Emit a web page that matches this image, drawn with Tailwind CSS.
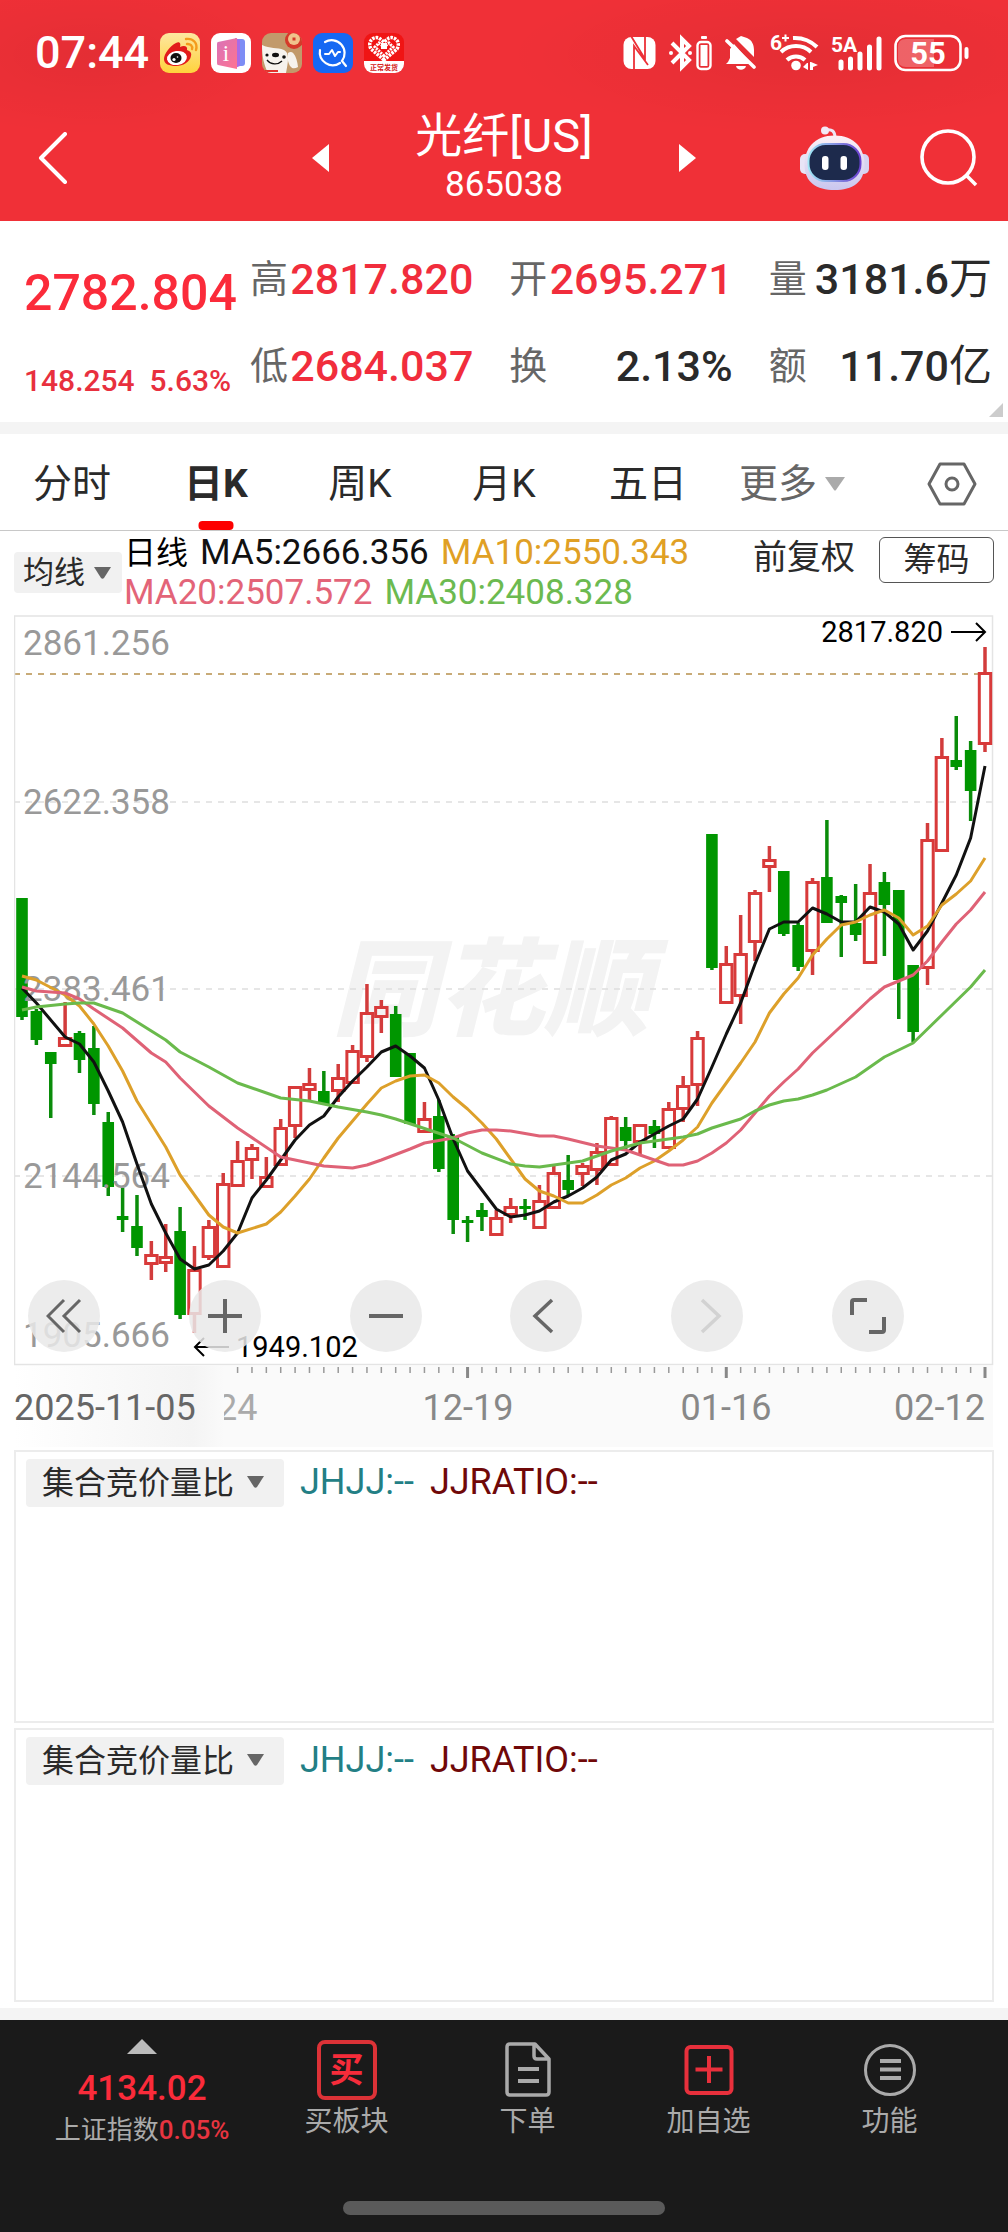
<!DOCTYPE html>
<html lang="zh-CN">
<head>
<meta charset="utf-8">
<meta name="viewport" content="width=device-width, initial-scale=1">
<title>光纤[US] 865038</title>
<script src="https://cdn.jsdelivr.net/npm/@tailwindcss/browser@4"></script>
</head>
<body class="bg-white font-[Roboto,'Noto_Sans_CJK_SC',sans-serif] text-[#2a2a2a]">

<header class="bg-[#f03037] bg-[radial-gradient(ellipse_200px_80px_at_9%_25%,rgba(0,0,0,0.05),transparent),radial-gradient(ellipse_300px_80px_at_80%_25%,rgba(0,0,0,0.05),transparent)] text-white">
  <!-- Status bar -->
  <div class="flex h-[106px] items-center justify-between pr-[38px] pl-[35px]">
    <div class="flex items-center gap-3">
      <span class="w-[113px] text-[45px] leading-[50px] font-medium">07:44</span>
      <div class="flex gap-[11px]">
        <svg class="size-10" viewBox="0 0 40 40" aria-hidden="true">
          <defs><linearGradient id="wb" x1="0" y1="0" x2="0" y2="1"><stop offset="0" stop-color="#fde7a0"/><stop offset="1" stop-color="#ffd23c"/></linearGradient></defs>
          <rect width="40" height="40" rx="9" fill="url(#wb)"/>
          <path d="M4 26c0-5 6-13 12-16 4-2 5 1 4 4 4-2 8-1 7 3 3 1 5 3 4 6-1 6-8 10-15 10S4 31 4 26z" fill="#e21b1b"/>
          <ellipse cx="17" cy="25" rx="10" ry="7" fill="#fff" transform="rotate(-8 17 25)"/>
          <ellipse cx="16" cy="25" rx="5.500" ry="5" fill="#111"/><circle cx="14" cy="26.500" r="1.600" fill="#fff"/><circle cx="17.500" cy="24" r=".8" fill="#fff"/>
          <path d="M26 6c7-1 12 4 10 11M27 11c3-.5 6 2 5 5" fill="none" stroke="#f49b1c" stroke-width="2.400" stroke-linecap="round"/>
        </svg>
        <svg class="size-10" viewBox="0 0 40 40" aria-hidden="true">
          <defs><linearGradient id="bk" x1="0" y1="0" x2="1" y2="1"><stop offset="0" stop-color="#d873b8"/><stop offset="1" stop-color="#ff7391"/></linearGradient></defs>
          <rect width="40" height="40" rx="9" fill="#fff"/>
          <path d="M26 6h5q3 0 3 3v21q0 3-3 3h-5z" fill="#7d8df5"/><path d="M24 5l5 2v26l-5 2z" fill="#a86be8"/>
          <path d="M7 9l19-4v31L7 32q-1 0-1-2V11q0-2 1-2z" fill="url(#bk)"/>
          <text x="15" y="28" text-anchor="middle" font-family="Liberation Serif,serif" font-size="23" fill="#fff">i</text>
        </svg>
        <svg class="size-10" viewBox="0 0 40 40" aria-hidden="true">
          <defs><clipPath id="dogc"><rect width="40" height="40" rx="9"/></clipPath></defs>
          <g clip-path="url(#dogc)"><rect width="40" height="40" fill="#c29a6b"/>
          <path d="M0 12c8 4 15 2 22 5 6 3 4 12 2 23H6C2 32 0 24 0 12z" fill="#f6f3ee"/>
          <path d="M26 20c6-4 9 6 10 14-5 3-8 1-10-6z" fill="#f6f3ee"/>
          <ellipse cx="13.500" cy="22" rx="3.500" ry="2.200" fill="#111"/><circle cx="5" cy="22" r="1.600" fill="#111"/><circle cx="22" cy="24" r="1.800" fill="#111"/>
          <path d="M5 27c4 5 11 5 15 1" fill="none" stroke="#111" stroke-width="1.300"/>
          <path d="M2 38h14" stroke="#e3312c" stroke-width="2"/>
          <circle cx="32" cy="7" r="9" fill="#d53a2a"/><circle cx="32" cy="6" r="6" fill="#f0c48c"/><rect x="30.500" y="4.500" width="3" height="3" fill="#d53a2a"/></g>
        </svg>
        <svg class="size-10" viewBox="0 0 40 40" aria-hidden="true">
          <rect width="40" height="40" rx="9" fill="#1668f3"/>
          <path d="M12 9a13 13 0 0 1 17 19l4 5M27 30A13 13 0 0 1 7 17" fill="none" stroke="#fff" stroke-width="2.200" stroke-linecap="round"/>
          <path d="M12 21h4l3-4 3 6 3-4h2" fill="none" stroke="#fff" stroke-width="2" stroke-linejoin="round" stroke-linecap="round"/>
        </svg>
        <svg class="size-10" viewBox="0 0 40 40" aria-hidden="true">
          <defs><clipPath id="hrt"><rect width="40" height="40" rx="9"/></clipPath></defs>
          <g clip-path="url(#hrt)"><rect width="40" height="40" fill="#f01414"/><rect y="28" width="40" height="12" fill="#fff"/>
          <path d="M20 27L7 16C3 9 9 3 15 5l5 4 5-4c6-2 12 4 8 11z" fill="none" stroke="#fff" stroke-width="3.500" stroke-dasharray="2.500 1"/>
          <path d="M20 23l-9-9 4-4 5 4 5-4 4 4z" fill="none" stroke="#fff" stroke-width="3" stroke-dasharray="2 1"/>
          <rect x="17" y="10" width="6" height="6" fill="#fff"/></g>
          <text x="20" y="37" text-anchor="middle" font-size="7" font-weight="700" fill="#d41a1a">正常发货</text>
        </svg>
      </div>
    </div>
    <div class="flex items-center gap-3">
      <svg class="h-10 w-[34px]" viewBox="625 34 34 40" aria-label="NFC">
        <rect x="625.500" y="38" width="32" height="32" rx="8" fill="#fff"/>
        <path d="M636 72V47l14 19M647 36v24L633 37" stroke="#ec3037" stroke-width="1.800" fill="none"/>
      </svg>
      <svg class="h-10 w-11" viewBox="672 34 44 40" aria-label="蓝牙">
        <path d="M675 44l17 17-7 7V40l7 7-17 17" fill="none" stroke="#fff" stroke-width="4"/><circle cx="674" cy="54" r="2" fill="#fff"/><circle cx="693" cy="54" r="2" fill="#fff"/>
        <rect x="700.500" y="43" width="13" height="27" rx="3.500" fill="none" stroke="#fff" stroke-width="2.400"/><rect x="703.500" y="46" width="7" height="21" fill="#fff"/><rect x="704" y="37" width="6" height="3" rx="1" fill="#fff"/>
      </svg>
      <svg class="h-10 w-8" viewBox="730 34 32 40" aria-label="静音">
        <path d="M733 63l2-4V50l4-5 18 20H731zM741 40l5-3 6 2c5 2 7 7 7 12v7zM741 67h10c-1 5-9 5-10 0z" fill="#fff"/>
        <path d="M732 42l27 26" stroke="#fff" stroke-width="3.600" stroke-linecap="round"/>
      </svg>
      <svg class="h-[50px] w-[50px]" viewBox="771 29 50 50" aria-label="WiFi">
        <text x="772" y="51" font-size="21" font-weight="700" fill="#fff">6</text><path d="M784 39h7M787.500 35.500v7" stroke="#fff" stroke-width="2"/>
        <circle cx="798" cy="66.500" r="4.800" fill="#fff"/><path d="M789 61a13 13 0 0 1 18 0M783 53a22 22 0 0 1 30 0M795 39a32 32 0 0 1 24 9" fill="none" stroke="#fff" stroke-width="4"/>
        <path d="M810 64v7l-5-3 4-4zM812 71v-8l1 0 7 3-5 2v3z" fill="#fff"/>
      </svg>
      <svg class="h-[50px] w-[51px]" viewBox="832 29 51 50" aria-label="信号">
        <text x="832" y="53" font-size="21" font-weight="700" fill="#fff">5A</text>
        <path d="M842 63v6M851.500 60v9M861 55v14M870.500 48v21M880 40v29" stroke="#fff" stroke-width="5" stroke-linecap="round"/>
      </svg>
      <svg class="h-10 w-[76px]" viewBox="895 34 76 40" aria-label="电量55">
        <rect x="896.500" y="37" width="65" height="34" rx="10" fill="none" stroke="#fff" stroke-width="2.600"/><path d="M935 40v28h-28q-8 0-8-8V48q0-8 8-8z" fill="#fff" fill-opacity=".25"/>
        <text x="929" y="65" text-anchor="middle" font-size="31" font-weight="700" fill="#fff">55</text><path d="M967.500 50v8" stroke="#fff" stroke-width="4" stroke-linecap="round"/>
      </svg>
    </div>
  </div>
  <!-- Title bar -->
  <div class="flex h-[115px] items-center px-[30px] pb-3">
    <div class="flex flex-1">
      <button class="p-2" aria-label="返回"><svg class="h-[52px] w-[30px]" viewBox="0 0 30 52" fill="none" stroke="#fff" stroke-width="4" stroke-linecap="round" stroke-linejoin="round"><path d="M27 2L3 26l24 24"/></svg></button>
    </div>
    <div class="flex w-[384px] items-center justify-between">
      <button aria-label="上一个"><svg class="h-7 w-[17px]" viewBox="0 0 17 28"><path d="M17 0v28L0 14z" fill="#fff"/></svg></button>
      <h1 class="text-center text-[47px] leading-[54px]">光纤[US]<span class="block text-[35px] leading-[44px]">865038</span></h1>
      <button aria-label="下一个"><svg class="h-7 w-[17px]" viewBox="0 0 17 28"><path d="M0 0v28l17-14z" fill="#fff"/></svg></button>
    </div>
    <div class="flex flex-1 items-center justify-end gap-[50px]">
      <button aria-label="助手">
        <svg class="h-16 w-[70px]" viewBox="801 123 70 64">
          <defs><linearGradient id="rb" x1="0" y1="0" x2="0" y2="1"><stop offset="0" stop-color="#fdf1f6"/><stop offset="1" stop-color="#c9c6ef"/></linearGradient><linearGradient id="rr" x1="0" y1="0" x2="1" y2="0"><stop offset="0" stop-color="#9fe6f5"/><stop offset="1" stop-color="#6a3fd0"/></linearGradient></defs>
          <path d="M827 127c6-1 9 1 9 8" fill="none" stroke="#ece6f5" stroke-width="3"/><circle cx="826" cy="127.500" r="4" fill="#f3eaf6"/>
          <rect x="801" y="151" width="12" height="20" rx="5" fill="#e8e4f6"/><rect x="858" y="151" width="12" height="20" rx="5" fill="#d6d2f0"/>
          <path d="M835.500 132.500c20 0 30 13 30 29 0 18-12 25.500-30 25.500s-30-7.500-30-25.500c0-16 10-29 30-29z" fill="url(#rb)"/>
          <rect x="809.500" y="141" width="52" height="37" rx="17" fill="#1d2a4c" stroke="url(#rr)" stroke-width="2"/>
          <rect x="823" y="153" width="6.500" height="14" rx="3" fill="#fff"/><rect x="841.500" y="153" width="6.500" height="14" rx="3" fill="#fff"/>
        </svg>
      </button>
      <button aria-label="搜索"><svg class="h-[58px] w-[58px]" viewBox="921 128 58 58" fill="none" stroke="#fff" stroke-width="3.600"><circle cx="949" cy="156" r="26"/><path d="M967 174l10 10"/></svg></button>
    </div>
  </div>
</header>

<main>
  <!-- Quote summary -->
  <section class="relative flex h-[201px] pr-4 pl-6">
    <div class="w-[226px] shrink-0 text-[#fb2b3a]">
      <p class="mt-10 text-[50px] leading-[64px] font-medium">2782.804</p>
      <p class="mt-6 text-[30px] leading-[64px] font-medium whitespace-pre text-[#e8303e]">148.254  5.63%</p>
    </div>
    <dl class="grid flex-1 grid-cols-3 content-start gap-x-9 gap-y-[23px] pt-[26px] text-[43px] leading-[64px] font-medium whitespace-nowrap">
      <div class="flex items-center justify-between"><dt class="text-[38px] font-normal text-[#666]">高</dt><dd class="text-[#f12d3c]">2817.820</dd></div>
      <div class="flex items-center justify-between"><dt class="text-[38px] font-normal text-[#666]">开</dt><dd class="text-[#f12d3c]">2695.271</dd></div>
      <div class="flex items-center justify-between"><dt class="text-[38px] font-normal text-[#666]">量</dt><dd>3181.6<span class="font-normal">万</span></dd></div>
      <div class="flex items-center justify-between"><dt class="text-[38px] font-normal text-[#666]">低</dt><dd class="text-[#f12d3c]">2684.037</dd></div>
      <div class="flex items-center justify-between"><dt class="text-[38px] font-normal text-[#666]">换</dt><dd>2.13%</dd></div>
      <div class="flex items-center justify-between"><dt class="text-[38px] font-normal text-[#666]">额</dt><dd>11.70<span class="font-normal">亿</span></dd></div>
    </dl>
    <svg class="absolute right-[5px] bottom-[5px] h-[14px] w-[14px]" viewBox="0 0 14 14" aria-hidden="true"><path d="M14 0v14H0z" fill="#ccc"/></svg>
  </section>
  <div class="h-3 bg-[#f4f4f4]"></div>

  <!-- Period tabs -->
  <nav class="grid h-[97px] grid-cols-7 border-b border-[#c8c8c8] text-[39px] leading-[52px] whitespace-nowrap">
    <button class="pt-1">分时</button>
    <button class="relative pt-1 font-bold">日K<span class="absolute bottom-0 left-1/2 h-[9px] w-[35px] -translate-x-1/2 rounded bg-[#fd0000]"></span></button>
    <button class="pt-1">周K</button>
    <button class="pt-1">月K</button>
    <button class="pt-1">五日</button>
    <button class="flex items-center justify-center gap-2 pt-1 text-[#666]" aria-haspopup="menu">更多<svg class="h-[14px] w-5" viewBox="0 0 20 14"><path d="M0 0h20l-9 13q-1 1-2 0z" fill="#aaa"/></svg></button>
    <button class="flex items-center justify-center pt-1 pl-8" aria-label="设置"><svg class="h-11 w-[50px]" viewBox="0 0 50 44" fill="none" stroke="#666" stroke-width="3" stroke-linejoin="round"><path d="M13 2h24l11 20-11 20H13L2 22z"/><circle cx="25" cy="22" r="6"/></svg></button>
  </nav>

  <!-- Moving-average legend -->
  <section class="flex h-[84px] px-[14px] whitespace-nowrap">
    <label class="relative mt-[21px] h-[41px] w-[108px] shrink-0">
      <select class="size-full appearance-none rounded bg-[#f1f1f1] pl-[9px] text-[31px] leading-[41px]" aria-label="主图指标"><option>均线</option></select>
      <svg class="pointer-events-none absolute top-[15px] right-[11px] h-3 w-[17px]" viewBox="0 0 17 12"><path d="M0 0h17l-7 11q-1.500 1.500-3 0z" fill="#666"/></svg>
    </label>
    <div class="flex-1 pt-[2px] pl-[2px] text-[35px] leading-10">
      <p class="flex gap-3"><span class="text-[32px] text-black">日线</span><span class="text-[#111]">MA5:2666.356</span><span class="text-[#e0a025]">MA10:2550.343</span></p>
      <p class="flex gap-3"><span class="text-[#e36478]">MA20:2507.572</span><span class="text-[#6cba50]">MA30:2408.328</span></p>
    </div>
    <button class="mt-[3px] mr-6 h-[46px] text-[34px] leading-[46px]">前复权</button>
    <button class="mt-[6px] h-[46px] w-[115px] rounded-md border border-[#555] text-[33px] leading-[44px]">筹码</button>
  </section>

  <!-- Candlestick chart -->
  <section class="relative px-[14px]">
    <svg id="chart" class="block w-full" viewBox="14 615 980 833" role="img" aria-label="日K线图">
      <defs><linearGradient id="fade" x1="0" y1="0" x2="1" y2="0"><stop offset="0" stop-color="#fff"/><stop offset=".85" stop-color="#f4f4f4"/><stop offset="1" stop-color="#fafafa"/></linearGradient></defs>
      <text x="332" y="1027" font-size="106" font-weight="900" font-style="italic" fill="#f3f3f3">同花顺</text>
      <rect x="14" y="1366" width="979" height="81" fill="#fafafa"/>
      <path d="M14 802H993M14 989H993M14 1176H993" stroke="#dedede" stroke-width="1.500" stroke-dasharray="6 6"/>
      <path d="M14 674H993" stroke="#c8ab78" stroke-width="2" stroke-dasharray="6 6"/>
      <rect x="14.500" y="616" width="978" height="748.500" fill="none" stroke="#e4e4e4" stroke-width="1.500"/>
      <g id="candles"></g>
      <g font-size="35" fill="#999">
        <text x="23" y="655">2861.256</text><text x="23" y="814">2622.358</text><text x="23" y="1001">2383.461</text><text x="23" y="1188">2144.564</text><text x="23" y="1347">1905.666</text>
      </g>
      <g id="averages" fill="none" stroke-width="3" stroke-linejoin="round"></g>
      <g font-size="29" fill="#000"><text x="943" y="642" text-anchor="end">2817.820</text><text x="236" y="1357">1949.102</text></g>
      <path d="M951 632h34m-9-9l9 9-9 9M229 1347h-34m9-9l-9 9 9 9" fill="none" stroke="#000" stroke-width="2"/>
      <g id="ticks" stroke="#999" stroke-width="1.500"></g>
      <g font-size="36" fill="#888">
        <text x="217" y="1420" fill="#aaa">24</text>
        <rect x="14" y="1366" width="210" height="81" fill="url(#fade)"/>
        <text x="14" y="1420" fill="#666">2025-11-05</text>
        <text x="468" y="1420" text-anchor="middle">12-19</text><text x="726" y="1420" text-anchor="middle">01-16</text><text x="985" y="1420" text-anchor="end">02-12</text>
      </g>
    </svg>
    <div class="absolute inset-x-[14px] bottom-24 flex justify-between pr-[90px] pl-[14px]">
      <button class="grid size-[72px] place-items-center rounded-full bg-[#e9e9e9]/85" aria-label="最早"><svg class="size-9" viewBox="0 0 36 36" fill="none" stroke="#666" stroke-width="3"><path d="M18 2L2 18l16 16M34 2L18 18l16 16"/></svg></button>
      <button class="grid size-[72px] place-items-center rounded-full bg-[#e9e9e9]/85" aria-label="放大"><svg class="size-9" viewBox="0 0 36 36" fill="none" stroke="#666" stroke-width="4"><path d="M18 1v34M1 18h34"/></svg></button>
      <button class="grid size-[72px] place-items-center rounded-full bg-[#e9e9e9]/85" aria-label="缩小"><svg class="size-9" viewBox="0 0 36 36" fill="none" stroke="#666" stroke-width="4"><path d="M1 18h34"/></svg></button>
      <button class="grid size-[72px] place-items-center rounded-full bg-[#e9e9e9]/85" aria-label="左移"><svg class="size-9" viewBox="0 0 36 36" fill="none" stroke="#666" stroke-width="3.500"><path d="M24 2L7 18l17 16"/></svg></button>
      <button class="grid size-[72px] place-items-center rounded-full bg-[#e9e9e9]/85" aria-label="右移" disabled><svg class="size-9" viewBox="0 0 36 36" fill="none" stroke="#d2d2d2" stroke-width="3.500"><path d="M13 2l17 16-17 16"/></svg></button>
      <button class="grid size-[72px] place-items-center rounded-full bg-[#e9e9e9]/85" aria-label="全屏"><svg class="size-9" viewBox="0 0 36 36" fill="none" stroke="#666" stroke-width="4"><path d="M2 17V4q0-2 2-2h13M34 19v13q0 2-2 2H19"/></svg></button>
    </div>
  </section>

  <!-- Auction indicator panels -->
  <section class="px-[14px] pt-[2px] pb-[6px] text-[36px] leading-[48px]">
    <div class="flex h-[273px] items-start border-2 border-[#ececec] pt-[6px] pl-[10px]">
      <label class="relative h-12 w-[258px]">
        <select class="size-full appearance-none rounded bg-[#f1f1f1] pl-4 text-[32px]" aria-label="副图指标一"><option>集合竞价量比</option></select>
        <svg class="pointer-events-none absolute top-[18px] right-5 h-3 w-[17px]" viewBox="0 0 17 12"><path d="M0 0h17l-7 11q-1.500 1.500-3 0z" fill="#666"/></svg>
      </label>
      <span class="ml-4 text-[#237f85]">JHJJ:--</span><span class="ml-4 text-[#700808]">JJRATIO:--</span>
    </div>
    <div class="mt-[5px] flex h-[274px] items-start border-2 border-[#ececec] pt-[6px] pl-[10px]">
      <label class="relative h-12 w-[258px]">
        <select class="size-full appearance-none rounded bg-[#f1f1f1] pl-4 text-[32px]" aria-label="副图指标二"><option>集合竞价量比</option></select>
        <svg class="pointer-events-none absolute top-[18px] right-5 h-3 w-[17px]" viewBox="0 0 17 12"><path d="M0 0h17l-7 11q-1.500 1.500-3 0z" fill="#666"/></svg>
      </label>
      <span class="ml-4 text-[#237f85]">JHJJ:--</span><span class="ml-4 text-[#700808]">JJRATIO:--</span>
    </div>
  </section>
  <div class="h-3 bg-[#f4f4f4]"></div>
</main>

<!-- Bottom bar -->
<footer class="bg-[#1a1a1a] pb-[17px] text-[28px] leading-9 text-[#aaa]">
  <div class="grid h-[181px] grid-cols-[228fr_181fr_181fr_181fr_181fr] items-start px-7 whitespace-nowrap">
    <a href="#" class="flex flex-col items-center pt-[19px] text-[26px]">
      <svg class="h-[15px] w-[30px]" viewBox="0 0 30 15" aria-hidden="true"><path d="M15 0l15 15H0z" fill="#bbb"/></svg>
      <span class="mt-[15px] text-[35px] leading-10 font-medium text-[#fb2b3a]">4134.02</span>
      <span class="mt-[3px]">上证指数<span class="font-medium text-[#e83440]">0.05%</span></span>
    </a>
    <a href="#" class="flex flex-col items-center pt-5"><span class="flex h-[60px] w-[60px] items-center justify-center rounded-lg border-4 border-[#dc3237] text-[34px] font-bold text-[#f62c3a]">买</span><span class="mt-1">买板块</span></a>
    <a href="#" class="flex flex-col items-center pt-5"><svg class="h-[60px] w-[50px]" viewBox="0 0 50 60" fill="none" stroke="#aaa" stroke-width="3.500" stroke-linejoin="round" aria-hidden="true"><path d="M7 4h25l14 15v33q0 3-3 3H7q-3 0-3-3V7q0-3 3-3zM31 4v12q0 3 3 3h12"/><path d="M15 29h21M15 41h21" stroke-width="4"/></svg><span class="mt-1">下单</span></a>
    <a href="#" class="flex flex-col items-center pt-5"><svg class="h-[60px] w-[50px]" viewBox="0 0 50 60" fill="none" stroke="#e8303c" stroke-width="4" aria-hidden="true"><rect x="2.500" y="7" width="45" height="46" rx="4"/><path d="M25 16v27M11.500 29.500h27"/></svg><span class="mt-1">加自选</span></a>
    <a href="#" class="flex flex-col items-center pt-5"><svg class="h-[60px] w-[54px]" viewBox="0 0 54 60" fill="none" stroke="#aaa" stroke-width="3" aria-hidden="true"><circle cx="27" cy="30" r="24.500"/><path d="M17 21h21M17 29.500h21M17 38h21" stroke-width="4"/></svg><span class="mt-1">功能</span></a>
  </div>
  <div class="mx-auto h-[14px] w-[322px] rounded-full bg-[#5a5a5a]"></div>
</footer>

<script>
// [direction, high, body top, body bottom, low]
const candles = [
['g',898,898,1017,1020],['g',1009,1011,1040,1045],['g',1052,1052,1064,1118],['r',1002,1037,1047,1047],['g',1031,1033,1060,1073],['g',1026,1048,1104,1115],['g',1112,1122,1187,1196],['g',1188,1216,1220,1232],['g',1195,1226,1248,1256],['r',1241,1254,1265,1280],
['r',1224,1256,1264,1272],['g',1207,1231,1315,1319],['r',1246,1269,1315,1333],['r',1220,1226,1258,1260],['r',1173,1183,1268,1268],['r',1141,1160,1187,1187],['r',1144,1147,1161,1179],['r',1157,1176,1188,1188],['r',1119,1127,1166,1166],['r',1086,1086,1127,1138],
['r',1068,1083,1091,1100],['g',1071,1091,1104,1104],['r',1064,1077,1092,1102],['r',1045,1050,1084,1084],['r',984,1012,1058,1062],['r',1000,1006,1018,1033],['g',1006,1014,1077,1077],['g',1053,1053,1124,1124],['r',1102,1118,1133,1133],['g',1100,1116,1169,1172],
['g',1134,1136,1220,1234],['g',1216,1220,1223,1242],['g',1203,1210,1217,1231],['r',1210,1217,1236,1236],['r',1198,1206,1216,1223],['g',1199,1206,1209,1220],['r',1185,1200,1229,1229],['r',1166,1172,1209,1209],['g',1155,1180,1190,1195],['r',1163,1165,1175,1186],
['r',1143,1151,1171,1185],['r',1116,1117,1166,1166],['g',1117,1127,1141,1149],['r',1124,1124,1143,1155],['g',1120,1126,1134,1148],['r',1102,1108,1149,1149],['r',1076,1085,1110,1122],['r',1031,1037,1086,1106],['g',834,834,968,970],['r',946,963,1004,1004],
['r',915,953,997,1024],['r',890,892,943,961],['r',846,859,868,892],['g',871,871,934,936],['g',923,925,967,971],['r',878,881,952,975],['g',820,877,923,923],['g',895,896,903,957],['g',884,923,935,941],['r',864,892,964,964],
['g',872,882,905,956],['g',890,890,980,1019],['g',965,965,1032,1042],['r',823,839,969,985],['r',738,756,852,852],['g',716,760,767,770],['g',741,750,791,821],['r',647,672,745,752]];
// index:y pairs for each moving average
const averages = [
['#111','0:988 1:1003 3:1037 4:1044 5:1062 6:1091 7:1122 8:1164 9:1204 10:1233 11:1259 12:1269 13:1265 14:1251 15:1233 16:1198 17:1180 18:1160 19:1140 20:1125 21:1116 22:1097 23:1081 24:1067 25:1052 26:1046 27:1056 28:1068 29:1100 30:1139 31:1171 32:1190 33:1209 34:1217 35:1215 36:1211 37:1202 38:1196 39:1188 40:1177 41:1160 42:1154 43:1142 44:1134 45:1126 46:1119 47:1099 48:1067 49:1034 50:1003 51:964 52:929 53:922 54:922 55:908 56:914 57:922 58:922 59:907 60:912 61:924 62:950 63:931 64:903 65:875 66:838 67:766'],
['#dda02a','0:976 1:980 3:995 4:1006 5:1024 6:1046 7:1071 8:1101 10:1147 11:1175 13:1215 14:1227 15:1233 17:1224 18:1212 19:1196 20:1179 21:1158 22:1138 23:1121 24:1104 25:1088 26:1081 27:1076 28:1075 29:1083 30:1097 31:1109 32:1123 33:1139 34:1159 35:1179 36:1191 37:1196 38:1203 39:1203 40:1195 41:1185 42:1178 43:1168 44:1161 45:1151 46:1140 47:1127 48:1103 49:1083 50:1063 51:1042 52:1013 53:994 54:978 55:955 56:939 57:925 58:922 59:915 60:910 61:918 62:935 63:926 64:905 65:894 66:881 67:858'],
['#df6276','0:987 1:991 3:993 4:999 5:1009 7:1028 9:1053 10:1062 11:1078 13:1106 15:1128 18:1157 20:1163 21:1166 22:1167 23:1168 24:1165 25:1160 27:1149 28:1143 30:1138 31:1133 32:1130 33:1130 34:1131 36:1136 37:1136 38:1139 40:1146 42:1150 43:1155 45:1165 46:1165 47:1161 48:1153 49:1143 50:1130 51:1113 52:1096 53:1082 54:1069 55:1053 57:1026 59:999 60:987 61:981 62:975 63:961 64:942 65:924 66:910 67:892'],
['#6aba4c','0:1010 1:1007 3:1004 4:1003 5:1003 7:1013 10:1040 11:1052 13:1067 15:1083 18:1098 20:1101 22:1107 24:1112 25:1115 26:1119 30:1138 32:1153 34:1164 35:1166 36:1167 38:1163 39:1161 40:1156 41:1151 43:1143 44:1141 46:1137 47:1134 48:1128 50:1119 51:1111 52:1105 53:1101 54:1099 55:1095 56:1090 58:1077 60:1057 62:1043 63:1029 64:1015 65:1001 66:987 67:970']];
const step = 963 / 67, xAt = i => 22 + i * step;
document.getElementById('candles').innerHTML = candles.map(([dir, high, top, bottom, low], i) => {
  const x = xAt(i);
  if (dir === 'g') return `<path d="M${x} ${high}V${low}" stroke="#0a8c0a" stroke-width="3.500"/><rect x="${x - 5.800}" y="${top}" width="11.600" height="${bottom - top}" fill="#009600"/>`;
  return `<path d="M${x} ${high}V${top + 1}M${x} ${bottom - 1}V${low}" stroke="#d23c3c" stroke-width="3.500"/><rect x="${x - 5.700}" y="${top + 1.500}" width="11.400" height="${bottom - top - 3}" fill="none" stroke="#d83a3a" stroke-width="3"/>`;
}).join('');
document.getElementById('averages').innerHTML = averages.map(([color, data]) =>
  `<polyline stroke="${color}" points="${data.split(' ').map(p => { const [i, y] = p.split(':'); return xAt(+i) + ',' + y; }).join(' ')}"/>`).join('');
document.getElementById('ticks').innerHTML = candles.map((_, i) => {
  const major = i === 31 || i === 49 || i === 67;
  return `<path d="M${xAt(i)} 1367v${major ? 11 : 6}"${major ? ' stroke="#888" stroke-width="3"' : ''}/>`;
}).join('');
</script>
</body>
</html>
